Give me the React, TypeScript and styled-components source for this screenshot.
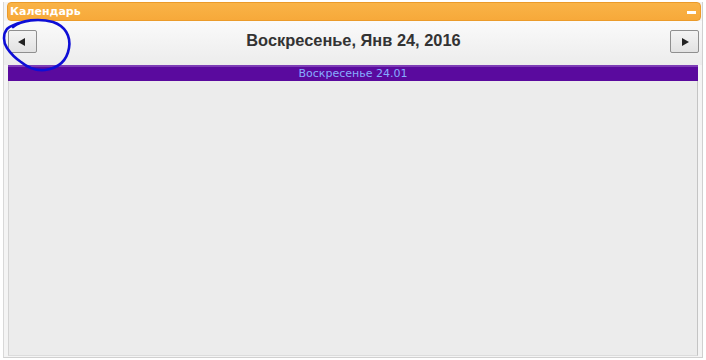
import { FC } from "react";
import styled, { createGlobalStyle } from "styled-components";

const GlobalStyle = createGlobalStyle`
  html, body {
    margin: 0;
    padding: 0;
    background: #ffffff;
  }
`;

const Panel = styled.div`
  position: relative;
  width: 700px;
  height: 356px;
  margin: 2px 0 0 3px;
  border-right: 1px solid #d0d0d0;
  border-left: 1px solid #d8d8d8;
  border-bottom: 1px solid #d0d0d0;
  box-sizing: border-box;
  display: flex;
  flex-direction: column;
  background: #f4f4f4;
`;

const TitleBar = styled.div`
  height: 19px;
  margin: 0 1px 0 3px;
  border-radius: 4px;
  background: linear-gradient(#f9b347, #f7a93a);
  border: 1px solid #eb9b2a;
  box-sizing: border-box;
  display: flex;
  align-items: center;
  justify-content: space-between;
  padding: 0 4px 0 2px;
  color: #ffffff;
  font: bold 11px "DejaVu Sans", sans-serif;
`;

const Minimize = styled.span`
  width: 9px;
  height: 3px;
  background: #ffffff;
  margin-top: 2px;
`;

const Toolbar = styled.div`
  height: 44px;
  display: flex;
  align-items: center;
  justify-content: space-between;
  padding: 0 3px 0 4px;
  background: linear-gradient(#fafafa, #ececec);
`;

const NavButton = styled.button`
  width: 29px;
  height: 23px;
  margin-top: -3px;
  padding: 0;
  border: 1px solid #8f8f8f;
  border-radius: 2px;
  background: linear-gradient(#f4f4f4, #e2e2e2);
  display: flex;
  align-items: center;
  justify-content: center;
`;

const Arrow = styled.span<{ $dir: "left" | "right" }>`
  width: 0;
  height: 0;
  border-top: 4px solid transparent;
  border-bottom: 4px solid transparent;
  ${({ $dir }) =>
    $dir === "left"
      ? "border-right: 7px solid #222; margin-left: -2px;"
      : "border-left: 7px solid #222; margin-left: 2px;"}
`;

const DateTitle = styled.div`
  font: bold 16.4px "Liberation Sans", Arial, sans-serif;
  color: #333333;
  margin-top: -6px;
`;

const DayHeader = styled.div`
  height: 16px;
  margin: 0 4px;
  background: #5a0a9e;
  border-top: 2px solid #7d3db6;
  box-sizing: border-box;
  color: #86adff;
  text-align: center;
  font: 11px/14px "DejaVu Sans", sans-serif;
`;

const DayBody = styled.div`
  flex: 1;
  margin: 0 4px 1px;
  background: #ececec;
  border-left: 1px solid #d4d4d4;
  border-right: 1px solid #c4c4c4;
  border-bottom: 1px solid #dcdcdc;
`;

const Annotation = styled.svg`
  position: absolute;
  left: -3px;
  top: -2px;
  pointer-events: none;
`;

const App: FC = () => (
  <>
    <GlobalStyle />
    <Panel>
      <TitleBar>
        <span>Календарь</span>
        <Minimize />
      </TitleBar>
      <Toolbar>
        <NavButton>
          <Arrow $dir="left" />
        </NavButton>
        <DateTitle>Воскресенье, Янв 24, 2016</DateTitle>
        <NavButton>
          <Arrow $dir="right" />
        </NavButton>
      </Toolbar>
      <DayHeader>Воскресенье 24.01</DayHeader>
      <DayBody />
      <Annotation width="80" height="80" viewBox="0 0 80 80">
        <path
          d="M12 27 C20 20 38 18 52 22 C64 26 70 36 68 48 C66 60 58 68 44 70 C34 71 26 67 20 62 C14 58 10 54 6 48 C2 42 2 34 6 29 C9 26 14 24 22 22"
          fill="none"
          stroke="#0e0ed6"
          strokeWidth="2.6"
          strokeLinecap="round"
          strokeLinejoin="round"
        />
      </Annotation>
    </Panel>
  </>
);

export default App;
